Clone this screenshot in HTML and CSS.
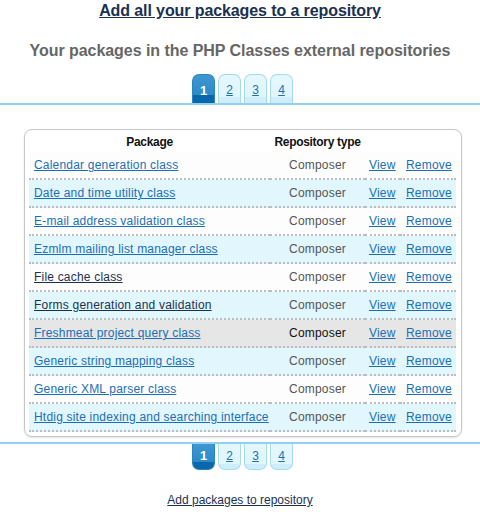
FILE: index.html
```html
<!DOCTYPE html>
<html>
<head>
<meta charset="utf-8">
<link rel="stylesheet" href="styles.css">
</head>
<body>
<h1 class="title"><a href="#">Add all your packages to a repository</a></h1>
<h2 class="subtitle">Your packages in the PHP Classes external repositories</h2>
<div class="tabs tabs-top">
  <span class="tab current">1</span>
  <a class="tab" href="#">2</a>
  <a class="tab" href="#">3</a>
  <a class="tab" href="#">4</a>
</div>
<div class="card">
  <table class="packages">
    <colgroup><col class="c1"><col class="c2"><col class="c3"><col class="c4"></colgroup>
    <thead>
      <tr><th>Package</th><th>Repository type</th><th></th><th></th></tr>
    </thead>
    <tbody>
      <tr><td><a href="#">Calendar generation class</a></td><td class="type">Composer</td><td class="act"><a href="#">View</a></td><td class="act rm"><a href="#">Remove</a></td></tr>
      <tr><td><a href="#">Date and time utility class</a></td><td class="type">Composer</td><td class="act"><a href="#">View</a></td><td class="act rm"><a href="#">Remove</a></td></tr>
      <tr><td><a href="#">E-mail address validation class</a></td><td class="type">Composer</td><td class="act"><a href="#">View</a></td><td class="act rm"><a href="#">Remove</a></td></tr>
      <tr><td><a href="#">Ezmlm mailing list manager class</a></td><td class="type">Composer</td><td class="act"><a href="#">View</a></td><td class="act rm"><a href="#">Remove</a></td></tr>
      <tr><td><a class="visited" href="#">File cache class</a></td><td class="type">Composer</td><td class="act"><a href="#">View</a></td><td class="act rm"><a href="#">Remove</a></td></tr>
      <tr><td><a class="visited" href="#">Forms generation and validation</a></td><td class="type">Composer</td><td class="act"><a href="#">View</a></td><td class="act rm"><a href="#">Remove</a></td></tr>
      <tr class="hover"><td><a href="#">Freshmeat project query class</a></td><td class="type">Composer</td><td class="act"><a href="#">View</a></td><td class="act rm"><a href="#">Remove</a></td></tr>
      <tr><td><a href="#">Generic string mapping class</a></td><td class="type">Composer</td><td class="act"><a href="#">View</a></td><td class="act rm"><a href="#">Remove</a></td></tr>
      <tr><td><a href="#">Generic XML parser class</a></td><td class="type">Composer</td><td class="act"><a href="#">View</a></td><td class="act rm"><a href="#">Remove</a></td></tr>
      <tr><td><a href="#">Htdig site indexing and searching interface</a></td><td class="type">Composer</td><td class="act"><a href="#">View</a></td><td class="act rm"><a href="#">Remove</a></td></tr>
    </tbody>
  </table>
</div>
<div class="tabs tabs-bottom">
  <span class="tab current">1</span>
  <a class="tab" href="#">2</a>
  <a class="tab" href="#">3</a>
  <a class="tab" href="#">4</a>
</div>
<p class="add"><a href="#">Add packages to repository</a></p>
</body>
</html>
```
FILE: styles.css
```css
html, body {
  margin: 0;
  padding: 0;
  background: #ffffff;
  font-family: "Liberation Sans", Arial, sans-serif;
  font-size: 12px;
  color: #333;
}

.title {
  margin: 0;
  padding-top: 1px;
  font-size: 16px;
  line-height: 20px;
  font-weight: bold;
  text-align: center;
  letter-spacing: -0.1px;
}
.title a {
  color: #1b3150;
}

.subtitle {
  margin: 20px 0 0 0;
  font-size: 16px;
  line-height: 20px;
  font-weight: bold;
  color: #666666;
  text-align: center;
  letter-spacing: -0.05px;
}

.tabs {
  display: flex;
  justify-content: center;
  gap: 3px;
  padding-left: 5px;
}

.tabs-top {
  margin-top: 13px;
  border-bottom: 2px solid #93cff2;
  align-items: flex-end;
}

.tabs-bottom {
  margin-top: 5px;
  border-top: 2px solid #93cff2;
  align-items: flex-start;
}

.tab {
  box-sizing: border-box;
  width: 23px;
  height: 29px;
  display: flex;
  align-items: center;
  justify-content: center;
  font-size: 12px;
  color: #1a6fb5;
  background: linear-gradient(to bottom, #e4f8fd 0, #e0f6fd 78%, #cdeefa 78%, #cdeefa 100%);
  border: 1px solid #a6dbef;
}

.tabs-top .tab {
  border-radius: 7px 7px 0 0;
  border-bottom: none;
  padding-top: 2px;
}

.tabs-bottom .tab {
  height: 26px;
  border-radius: 0 0 7px 7px;
  border-top: none;
  padding-bottom: 2px;
  background: linear-gradient(to bottom, #e4f8fd 0, #e0f6fd 80%, #cdeefa 80%, #cdeefa 100%);
}

.tab.current {
  color: #ffffff;
  font-weight: bold;
  font-size: 13px;
  border-color: #2a86c2;
  background: linear-gradient(to bottom, #3e98d1 0, #2d8ac6 72%, #0a67ab 72%, #0a67ab 100%);
}

.tabs-bottom .tab.current {
  background: linear-gradient(to bottom, #3e98d1 0, #2d8ac6 70%, #0a67ab 70%, #0a67ab 100%);
}

.card {
  margin: 24px 18px 0 24px;
  padding: 3px 4px 4px 4px;
  border: 1px solid #c6c6c6;
  border-radius: 8px;
  box-shadow: 0 1px 2px rgba(0, 0, 0, 0.12);
}

.packages {
  width: 427px;
  border-collapse: separate;
  border-spacing: 0;
  table-layout: fixed;
}

.c1 { width: 241px; }
.c2 { width: 95px; }
.c3 { width: 35px; }
.c4 { width: 56px; }

.packages th {
  height: 19px;
  padding: 0;
  font-size: 12px;
  font-weight: bold;
  color: #111;
  text-align: center;
  line-height: 19px;
  letter-spacing: -0.3px;
}

.packages td {
  height: 26px;
  padding: 0 0 0 5px;
  line-height: 14px;
  border-bottom: 2px dotted #bcbcbc;
  white-space: nowrap;
  letter-spacing: 0.2px;
  vertical-align: middle;
}

.packages td.type {
  padding: 0;
  text-align: center;
  color: #555555;
}

.packages td.act {
  padding-left: 4px;
}

.packages td.rm {
  padding-left: 6px;
}

.packages tbody tr:nth-child(odd) td {
  background: #fdfdfd;
}

.packages tbody tr:nth-child(even) td {
  background: #e1f6fd;
}

.packages tbody tr.hover td {
  background: #e6e6e6;
}

.packages tbody tr.hover td.type {
  color: #111;
}

.packages a {
  color: #1a6fb5;
}

.packages a.visited {
  color: #1b3150;
}

.add {
  margin: 23px 0 0 0;
  text-align: center;
  font-size: 12px;
  line-height: 14px;
}

.add a {
  color: #1b3150;
}
```
